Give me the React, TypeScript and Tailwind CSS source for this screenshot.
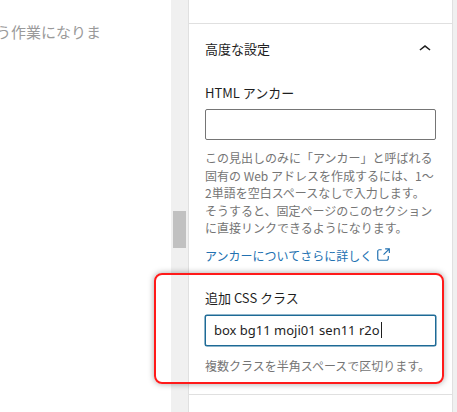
import React from "react";

const jp = { fontFamily: '"Noto Sans CJK JP", "Noto Sans", sans-serif' };

export default function App() {
  return (
    <div className="flex h-[412px] w-[457px] overflow-hidden bg-white" style={jp}>
      {/* editor canvas */}
      <div className="w-[171px] shrink-0 overflow-hidden bg-white">
        <div className="-ml-[4px] mt-[21px] whitespace-nowrap text-[15px] leading-[22px] text-[#9a9a9a]">
          う作業になりま
        </div>
      </div>
      {/* scrollbar */}
      <div className="w-[17px] shrink-0 bg-[#f0f0f0] pt-[211px]">
        <div className="ml-[2px] h-[37px] w-[13px] bg-[#c1c1c1]" />
      </div>
      {/* sidebar */}
      <div className="w-[265px] shrink-0 border-x border-[#e0e0e0] bg-white">
        <div className="h-[24px] border-b border-[#e0e0e0]" />
        <div className="border-b border-[#e0e0e0] px-[16px] pb-[19px]">
          <div className="flex h-[50px] items-center justify-between">
            <span className="text-[13px] text-[#1e1e1e]">高度な設定</span>
            <svg width="24" height="24" viewBox="0 0 24 24" className="-mr-[1px]">
              <path d="M6.5 12.4L12 8l5.5 4.4-.9 1.2L12 10l-4.6 3.6-1-1.2z" fill="#1e1e1e" />
            </svg>
          </div>
          <div className="mt-[10px] text-[13px] leading-[18px] text-[#1e1e1e]">HTML アンカー</div>
          <div className="mt-[7px] h-[31px] rounded-[2px] border border-[#757575] bg-white" />
          <p className="mt-[9px] text-[12px] leading-[17.6px] text-[#757575]">
            この見出しのみに「アンカー」と呼ばれる固有の Web アドレスを作成するには、1〜2単語を空白スペースなしで入力します。そうすると、固定ページのこのセクションに直接リンクできるようになります。
          </p>
          <div className="mt-[10px] flex items-center text-[12px] leading-[18px] text-[#2271b1]">
            <span>アンカーについてさらに詳しく</span>
            <svg width="18" height="18" viewBox="0 0 24 24" className="ml-[2px] -mt-[2px]">
              <path
                d="M18.2 17c0 .7-.6 1.2-1.2 1.2H7c-.7 0-1.2-.6-1.2-1.2V7c0-.7.6-1.2 1.2-1.2h3.2V4.2H7C5.5 4.2 4.2 5.5 4.2 7v10c0 1.5 1.2 2.8 2.8 2.8h10c1.5 0 2.8-1.2 2.8-2.8v-3.6h-1.5V17zM14.9 3v1.5h3.7l-6.4 6.4 1.1 1.1 6.4-6.4v3.7h1.5V3h-6.3z"
                fill="#2271b1"
              />
            </svg>
          </div>
          <div className="relative mt-[24px]">
            <div className="pointer-events-none absolute -left-[51px] -top-[16px] h-[111px] w-[290px] rounded-[8px] border-2 border-[#ff1a1a] shadow-[0_0_6px_rgba(0,0,0,0.35)]" />
            <div className="text-[13px] leading-[18px] text-[#1e1e1e]">追加 CSS クラス</div>
            <div className="mt-[8px] flex h-[31px] items-center rounded-[2px] border border-[#1d6a96] bg-white pl-[8px] shadow-[0_0_0_0.5px_#1d6a96]">
              <span className="text-[13px] text-[#1e1e1e]" style={{ fontFamily: '"Noto Sans", sans-serif' }}>
                box bg11 moji01 sen11 r2o
              </span>
              <span className="ml-[1px] h-[16px] w-[1px] bg-[#1e1e1e]" />
            </div>
            <p className="mt-[11px] text-[12px] leading-[17.6px] text-[#757575]">
              複数クラスを半角スペースで区切ります。
            </p>
          </div>
        </div>
      </div>
      <div className="flex-1 bg-[#f0f0f0]" />
    </div>
  );
}
